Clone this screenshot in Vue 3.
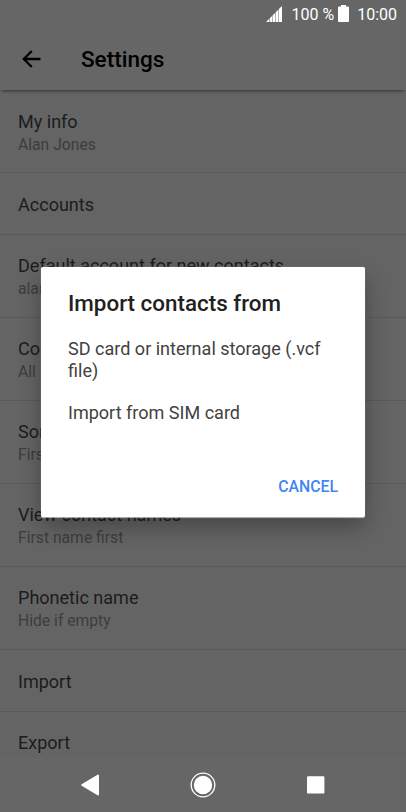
<script setup>
  import { ref } from 'vue'

  const settings = ref([
    { title: 'My info', summary: 'Alan Jones' },
    { title: 'Accounts' },
    { title: 'Default account for new contacts', summary: 'alan' },
    { title: 'Contacts', summary: 'All' },
    { title: 'Sort by', summary: 'First' },
    { title: 'View contact names', summary: 'First name first' },
    { title: 'Phonetic name', summary: 'Hide if empty' },
    { title: 'Import' },
    { title: 'Export' }
  ])

  const sources = ref(['SD card or internal storage (.vcf file)', 'Import from SIM card'])
</script>

<template>
  <div class="screen">
    <div class="status-bar">
      <svg class="signal" width="16" height="16" viewBox="0 0 16 16">
        <path d="M0 16L3 13V16ZM3.6 12.4L6 10V16H3.6ZM6.5 9.5L9.1 6.9V16H6.5ZM9.6 6.4L12.4 3.6V16H9.6ZM12.9 3.1L16 0V16H12.9Z" fill="#fff" />
      </svg>
      <span class="percent">100 %</span>
      <svg class="battery" width="11" height="17" viewBox="0 0 11 17">
        <path d="M3 0H8V1.5H10Q11 1.5 11 2.5V16Q11 17 10 17H1Q0 17 0 16V2.5Q0 1.5 1 1.5H3Z" fill="#fff" />
      </svg>
      <span class="clock">10:00</span>
    </div>

    <div class="app-bar">
      <svg class="back" width="20" height="18" viewBox="0 0 20 18">
        <path d="M18.5 9H2M9.8 1L1.8 9L9.8 17" fill="none" stroke="#000" stroke-width="2.3" />
      </svg>
      <h1>Settings</h1>
    </div>

    <ul class="settings">
      <li v-for="item in settings" :key="item.title" :class="{ single: !item.summary }">
        <div class="title">{{ item.title }}</div>
        <div v-if="item.summary" class="summary">{{ item.summary }}</div>
      </li>
    </ul>

    <div class="nav-bar">
      <svg width="24" height="26" viewBox="0 0 24 26">
        <path d="M3.2 13L19 3.6V22.4Z" fill="#fff" stroke="#fff" stroke-width="2" stroke-linejoin="round" />
      </svg>
      <svg width="26" height="26" viewBox="0 0 26 26">
        <circle cx="13" cy="13" r="11.8" fill="none" stroke="#fff" stroke-width="1.3" />
        <circle cx="13" cy="13" r="9.2" fill="#fff" />
      </svg>
      <svg width="26" height="26" viewBox="0 0 26 26">
        <rect x="4" y="4.2" width="17.4" height="17.4" rx="1.2" fill="#fff" />
      </svg>
    </div>

    <div class="dialog">
      <h2>Import contacts from</h2>
      <div v-for="source in sources" :key="source" class="source">{{ source }}</div>
      <button class="cancel">CANCEL</button>
    </div>
  </div>
</template>

<style>
  body {
    margin: 0;
    background: #666;
  }
</style>

<style scoped>
  .screen {
    position: relative;
    display: flex;
    flex-direction: column;
    width: 406px;
    height: 812px;
    overflow: hidden;
    background: #646464;
    font-family: Roboto, sans-serif;
  }

  .status-bar {
    display: flex;
    flex: none;
    align-items: center;
    justify-content: flex-end;
    box-sizing: border-box;
    height: 28px;
    padding-right: 9px;
    background: #666;
    color: #fff;
    font-size: 16px;
    line-height: 28px;
  }

  .percent {
    padding-top: 1px;
    margin-left: 9px;
  }

  .battery {
    margin: 0 8px 1px 4px;
  }

  .clock {
    padding-top: 1px;
  }

  .app-bar {
    display: flex;
    flex: none;
    align-items: center;
    height: 62px;
    padding-left: 22px;
    background: #666;
    box-shadow: 0 3px 3px -2px rgba(0, 0, 0, 0.5);
  }

  .back {
    margin-bottom: 1px;
  }

  h1 {
    margin: 0 0 0 39px;
    color: #000;
    font-size: 22.5px;
    font-weight: 500;
    line-height: 28px;
  }

  .settings {
    flex: 1;
    min-height: 0;
    margin: 0;
    padding: 0;
    overflow: hidden;
    list-style: none;
  }

  li {
    box-sizing: border-box;
    height: 83.1px;
    padding: 20.5px 18px 0;
    border-bottom: 1px solid #595959;
  }

  li.single {
    height: 61.5px;
  }

  .title {
    color: #1c1c1c;
    font-size: 18.05px;
    line-height: 22px;
    white-space: nowrap;
  }

  .summary {
    margin-top: 2px;
    color: #3d3d3d;
    font-size: 15.7px;
    line-height: 20px;
    white-space: nowrap;
  }

  .nav-bar {
    display: flex;
    flex: none;
    align-items: center;
    justify-content: space-between;
    box-sizing: border-box;
    height: 54px;
    padding: 0 77px 0 79px;
    background: #666;
  }

  /* the dialog floats over the dimmed settings list */
  .dialog {
    position: absolute;
    top: 267px;
    left: 41px;
    display: flex;
    flex-direction: column;
    box-sizing: border-box;
    width: 324px;
    height: 250px;
    padding: 22px 27px 0;
    border-radius: 2px;
    background: #fff;
    box-shadow: 0 0.5px 1px rgba(255, 255, 255, 0.6), 0 10px 22px rgba(0, 0, 0, 0.3);
  }

  h2 {
    margin: 0 0 21px;
    color: #212121;
    font-size: 22.4px;
    font-weight: 500;
    line-height: 28px;
    white-space: nowrap;
  }

  .source {
    margin-bottom: 21px;
    color: #424242;
    font-size: 18.05px;
    line-height: 21.5px;
  }

  .cancel {
    align-self: flex-end;
    margin-top: 32px;
    padding: 0;
    border: 0;
    background: none;
    color: #4285f4;
    font-family: inherit;
    font-size: 15.8px;
    font-weight: 500;
    line-height: 20px;
  }
</style>
